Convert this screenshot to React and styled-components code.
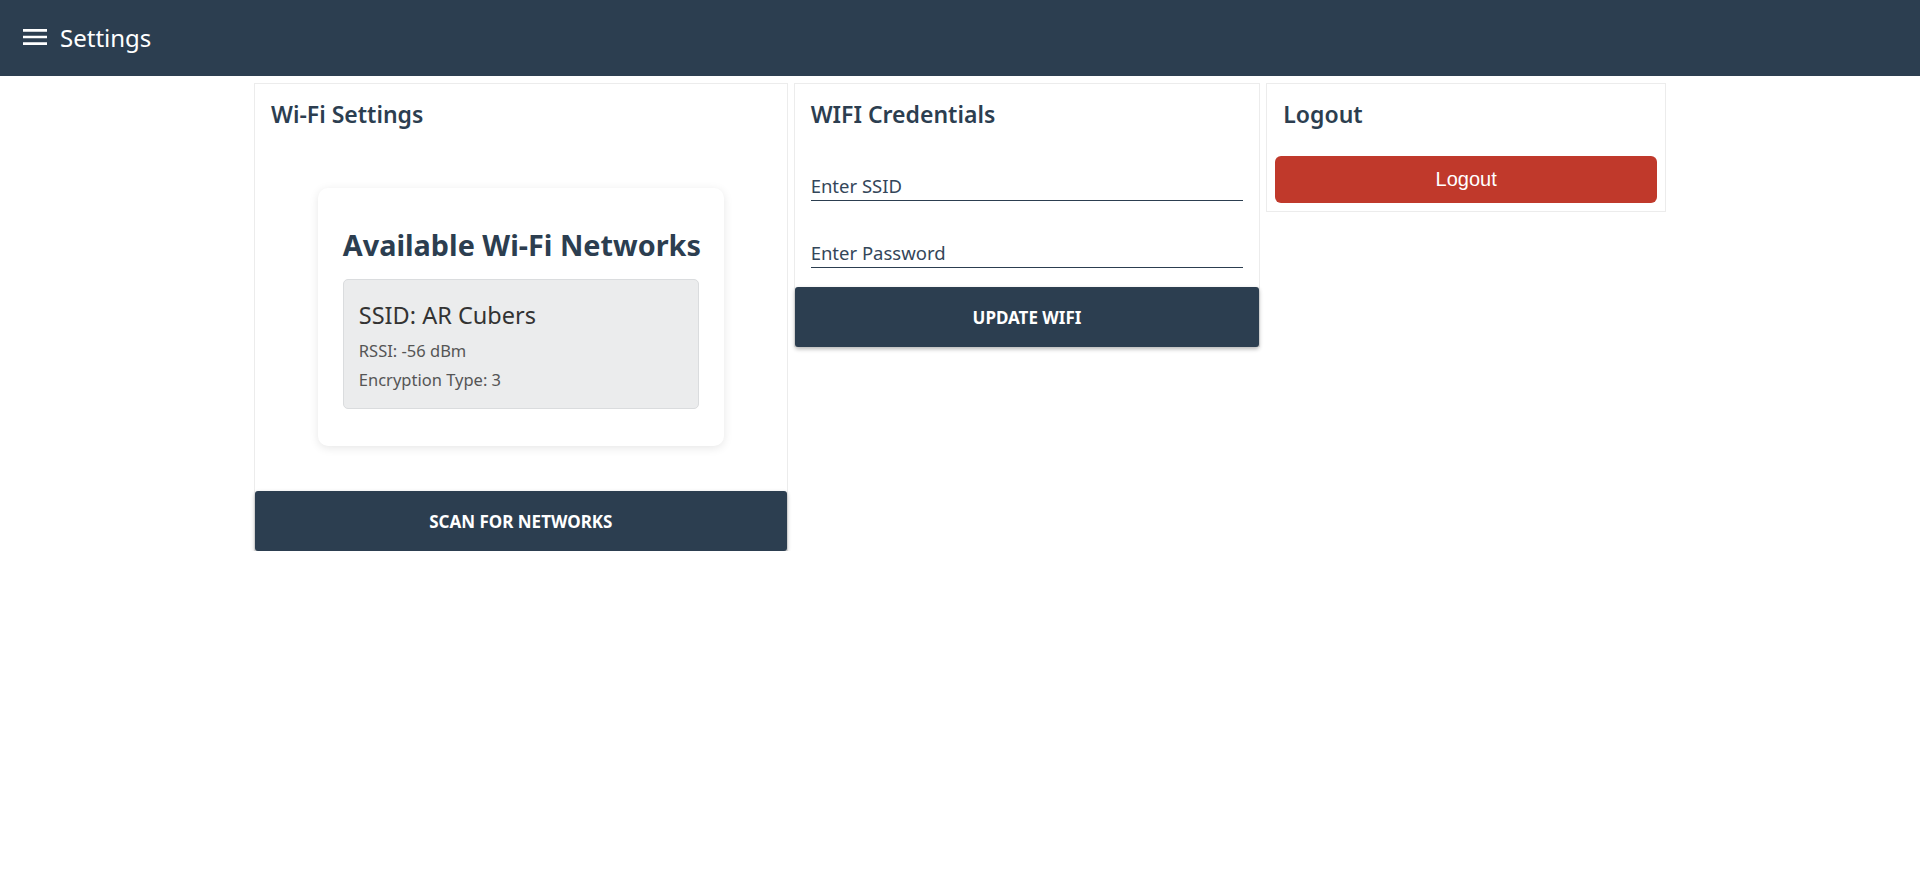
import styled, { createGlobalStyle } from "styled-components";

const GlobalStyle = createGlobalStyle`
  body {
    margin: 0;
    background: #ffffff;
    font-family: "Noto Sans", "Open Sans", sans-serif;
    color: #2c3e50;
  }
  * { box-sizing: border-box; }
`;

const Header = styled.header`
  height: 76px;
  background: #2c3e50;
  display: flex;
  align-items: center;
  padding: 0 0 2px 19px;
  color: #ffffff;
`;

const MenuButton = styled.button`
  width: 32px;
  height: 32px;
  padding: 0;
  border: none;
  background: none;
  color: #ffffff;
  display: flex;
  margin-right: 9px;
`;

const HeaderTitle = styled.h1`
  margin: 0;
  font-size: 24px;
  font-weight: 400;
`;

const Content = styled.main`
  width: 1412px;
  margin: 7px auto 0;
  display: flex;
  align-items: flex-start;
  gap: 6px;
`;

const Card = styled.section`
  width: ${(p) => p.$width}px;
  border: 1px solid #ececec;
  display: flex;
  flex-direction: column;
  background: #fff;
`;

const CardTitle = styled.h2`
  margin: 0;
  padding: 15px 16px 0;
  font-size: 23px;
  line-height: 31px;
  font-weight: 600;
  color: #2c3e50;
`;

const DarkButton = styled.button`
  height: 60px;
  width: 100%;
  margin-top: ${(p) => p.$top}px;
  margin-bottom: -1px;
  border: none;
  border-radius: 3px;
  background: #2c3e50;
  color: #ffffff;
  font-family: "Noto Sans", sans-serif;
  font-size: 17px;
  font-weight: 700;
  text-transform: uppercase;
  box-shadow: 0 2px 4px rgba(0, 0, 0, 0.3);
  cursor: pointer;
`;

const NetworksPanel = styled.div`
  align-self: center;
  width: 406px;
  margin-top: 58px;
  padding: 39px 25px 37px;
  border-radius: 10px;
  background: #fff;
  box-shadow: 0 2px 10px rgba(0, 0, 0, 0.1);
`;

const PanelHeading = styled.h3`
  margin: 0 0 17px;
  font-size: 28.8px;
  line-height: 35px;
  font-weight: 700;
  color: #2c3e50;
  white-space: nowrap;
`;

const NetworkItem = styled.div`
  padding: 21px 15px 16px;
  background: #ebeced;
  border: 1px solid #dadcde;
  border-radius: 5px;
`;

const Ssid = styled.div`
  font-size: 23.5px;
  line-height: 28px;
  color: #333;
  margin-bottom: 10px;
`;

const Detail = styled.p`
  margin: 0;
  font-size: 16.5px;
  line-height: 24px;
  color: #555;
  & + & {
    margin-top: 5px;
  }
`;

const Form = styled.div`
  padding: 0 16px;
  display: flex;
  flex-direction: column;
  gap: 29px;
  margin-top: 33px;
`;

const Input = styled.input`
  width: 100%;
  height: 38px;
  padding: 10px 0 2px;
  border: none;
  border-bottom: 1px solid #2c3e50;
  font-family: "Noto Sans", sans-serif;
  font-size: 18.5px;
  line-height: 25px;
  color: #2c3e50;
  outline: none;
  background: transparent;
  &::placeholder {
    color: #34465a;
  }
`;

const LogoutButton = styled.button`
  height: 47px;
  margin: 26px 8px 8px;
  border: none;
  border-radius: 6px;
  background: #c0392b;
  color: #fff;
  font-family: "Liberation Sans", Arial, sans-serif;
  font-size: 20px;
  cursor: pointer;
`;

const MenuIcon = () => (
  <svg width="32" height="32" viewBox="0 0 24 24" fill="currentColor">
    <path d="M3 18h18v-2H3v2zm0-5h18v-2H3v2zm0-7v2h18V6H3z" />
  </svg>
);

const networks = [{ ssid: "AR Cubers", rssi: -56, enc: 3 }];

export default function App() {
  return (
    <>
      <GlobalStyle />
      <Header>
        <MenuButton aria-label="menu">
          <MenuIcon />
        </MenuButton>
        <HeaderTitle>Settings</HeaderTitle>
      </Header>
      <Content>
        <Card $width={534}>
          <CardTitle>Wi-Fi Settings</CardTitle>
          <NetworksPanel>
            <PanelHeading>Available Wi-Fi Networks</PanelHeading>
            {networks.map((n) => (
              <NetworkItem key={n.ssid}>
                <Ssid>SSID: {n.ssid}</Ssid>
                <Detail>RSSI: {n.rssi} dBm</Detail>
                <Detail>Encryption Type: {n.enc}</Detail>
              </NetworkItem>
            ))}
          </NetworksPanel>
          <DarkButton $top={45}>Scan for networks</DarkButton>
        </Card>
        <Card $width={467}>
          <CardTitle>WIFI Credentials</CardTitle>
          <Form>
            <Input placeholder="Enter SSID" />
            <Input type="password" placeholder="Enter Password" />
          </Form>
          <DarkButton $top={19}>Update wifi</DarkButton>
        </Card>
        <Card $width={400}>
          <CardTitle>Logout</CardTitle>
          <LogoutButton>Logout</LogoutButton>
        </Card>
      </Content>
    </>
  );
}
